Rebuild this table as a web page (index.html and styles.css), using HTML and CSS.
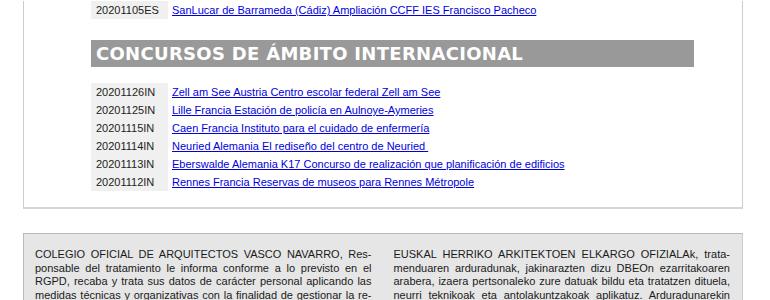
FILE: index.html
```html
<!DOCTYPE html>
<html lang="es">
<head>
<meta charset="utf-8">
<title>Concursos</title>
<link rel="stylesheet" href="styles.css">
</head>
<body>
<div class="page">
  <div class="panel">
    <table class="list">
      <tr><td class="code">20201105ES</td><td class="title"><a href="#">SanLucar de Barrameda (Cádiz) Ampliación CCFF IES Francisco Pacheco</a></td></tr>
    </table>
    <h2 class="section">CONCURSOS DE ÁMBITO INTERNACIONAL</h2>
    <table class="list list-intl">
      <tr><td class="code">20201126IN</td><td class="title"><a href="#">Zell am See Austria Centro escolar federal Zell am See</a></td></tr>
      <tr><td class="code">20201125IN</td><td class="title"><a href="#">Lille Francia Estación de policía en Aulnoye-Aymeries</a></td></tr>
      <tr><td class="code">20201115IN</td><td class="title"><a href="#">Caen Francia Instituto para el cuidado de enfermería</a></td></tr>
      <tr><td class="code">20201114IN</td><td class="title"><a href="#">Neuried Alemania El rediseño del centro de Neuried&nbsp;</a></td></tr>
      <tr><td class="code">20201113IN</td><td class="title"><a href="#">Eberswalde Alemania K17 Concurso de realización que planificación de edificios</a></td></tr>
      <tr><td class="code">20201112IN</td><td class="title"><a href="#">Rennes Francia Reservas de museos para Rennes Métropole</a></td></tr>
    </table>
  </div>
  <div class="legal">
    <p class="legal-col">COLEGIO OFICIAL DE ARQUITECTOS VASCO NAVARRO, Res&shy;ponsable del tratamiento le informa conforme a lo previsto en el RGPD, recaba y trata sus datos de carácter personal aplicando las medidas técnicas y organizativas con la finalidad de gestionar la re&shy;lación colegial y prestarle los servicios solicitados.</p>
    <p class="legal-col">EUSKAL HERRIKO ARKITEKTOEN ELKARGO OFIZIALAk, trata&shy;menduaren arduradunak, jakinarazten dizu DBEOn ezarritakoaren arabera, izaera pertsonaleko zure datuak bildu eta tratatzen dituela, neurri teknikoak eta antolakuntzakoak aplikatuz. Arduradunarekin harremana kudeatzeko helburuarekin.</p>
  </div>
</div>
</body>
</html>
```

FILE: styles.css
```css
html, body {
  margin: 0;
  padding: 0;
  background: #ffffff;
}
body {
  font-family: "Liberation Sans", Arial, sans-serif;
  font-size: 11px;
  color: #222222;
}
.page {
  width: 720px;
  margin-left: 23px;
  padding-top: 1px;
}
.panel {
  border: 1px solid #cccccc;
  border-top: none;
  border-bottom: 2px solid #d6d6d6;
  padding: 0 48px 16px 67px;
}
.list {
  border-collapse: collapse;
  width: 603px;
}
.list td {
  height: 18px;
  padding: 0;
  vertical-align: middle;
  white-space: nowrap;
}
.code {
  width: 72px;
  padding-left: 5px !important;
  background: #f0f0f0;
  color: #222222;
}
.title {
  padding-left: 4px !important;
}
.title a {
  color: #0000dd;
  text-decoration: underline;
}
.section {
  margin: 21px 0 0 0;
  height: 27px;
  line-height: 28px;
  padding-left: 5px;
  background: #999999;
  color: #ffffff;
  font-family: "DejaVu Sans", Verdana, sans-serif;
  font-weight: bold;
  font-size: 18px;
  letter-spacing: 0.3px;
}
.list-intl {
  margin-top: 16px;
}
.legal {
  margin-top: 24px;
  border: 1px solid #bbbbbb;
  border-bottom: none;
  border-right-color: #cccccc;
  background: #e6e6e6;
  padding: 14px 12px 12px 11px;
  display: grid;
  grid-template-columns: 1fr 1fr;
  column-gap: 22px;
}
.legal-col {
  margin: 0;
  text-align: justify;
  line-height: 13.5px;
  hyphens: manual;
  color: #1a1a1a;
}
```
